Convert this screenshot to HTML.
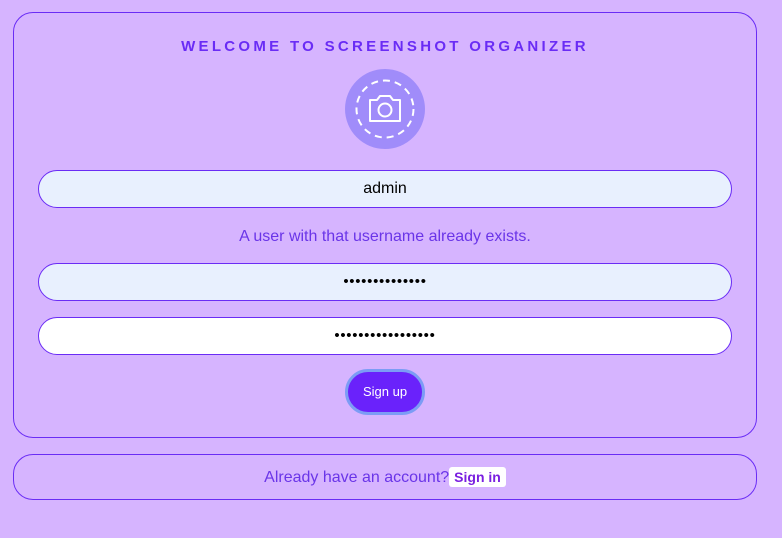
<!DOCTYPE html>
<html><head><style>
body{margin:0;width:782px;height:538px;background:#d6b4ff;font-family:"Liberation Sans",sans-serif;position:relative;overflow:hidden}
.card{position:absolute;left:13px;top:12px;width:744px;height:426px;border:1px solid #6a2cf5;border-radius:20px;box-sizing:border-box}
.card2{position:absolute;left:13px;top:454px;width:744px;height:46px;border:1px solid #6a2cf5;border-radius:20px;box-sizing:border-box;text-align:center;line-height:44px;color:#6a35e8;font-size:16px}
h1{position:absolute;top:38px;left:0;width:770px;text-align:center;margin:0;font-size:15px;letter-spacing:3.3px;color:#6a2cf5;font-weight:bold}
.logo{position:absolute;left:345px;top:69px;width:80px;height:80px;border-radius:50%;background:#a08cfa}
.inp{position:absolute;left:38px;width:694px;height:38px;border:1px solid #6a2cf5;border-radius:19px;box-sizing:border-box;text-align:center;line-height:36px;font-size:16px;color:#000}
.pw{font-size:15px;letter-spacing:0.7px}
.err{position:absolute;top:228px;left:0;width:770px;text-align:center;color:#6a35e8;font-size:16px}
.btn{position:absolute;left:345px;top:369px;width:80px;height:46px;border-radius:23px;background:#6a22fb;border:3px solid #7c9cf5;box-sizing:border-box;color:#fff;font-size:13px;text-align:center;line-height:40px}
.si{background:#fff;color:#7a1fe0;font-weight:bold;font-size:14px;padding:2px 5px;border-radius:3px}
</style></head><body>
<div class="card"></div>
<h1>WELCOME TO SCREENSHOT ORGANIZER</h1>
<div class="logo"><svg width="80" height="80" viewBox="0 0 80 80"><circle cx="40" cy="40" r="28.5" fill="none" stroke="#fff" stroke-width="2" stroke-dasharray="7 5"/><path d="M25 31h7l3-4h10l3 4h7v21h-30z" fill="none" stroke="#fff" stroke-width="2" stroke-linejoin="round"/><circle cx="40" cy="41" r="6.5" fill="none" stroke="#fff" stroke-width="2"/></svg></div>
<div class="inp" style="top:170px;background:#e8f0fe">admin</div>
<div class="err">A user with that username already exists.</div>
<div class="inp pw" style="top:263px;background:#e8f0fe">••••••••••••••</div>
<div class="inp pw" style="top:317px;background:#fff">•••••••••••••••••</div>
<div class="btn">Sign up</div>
<div class="card2">Already have an account?<span class="si">Sign in</span></div>
</body></html>
